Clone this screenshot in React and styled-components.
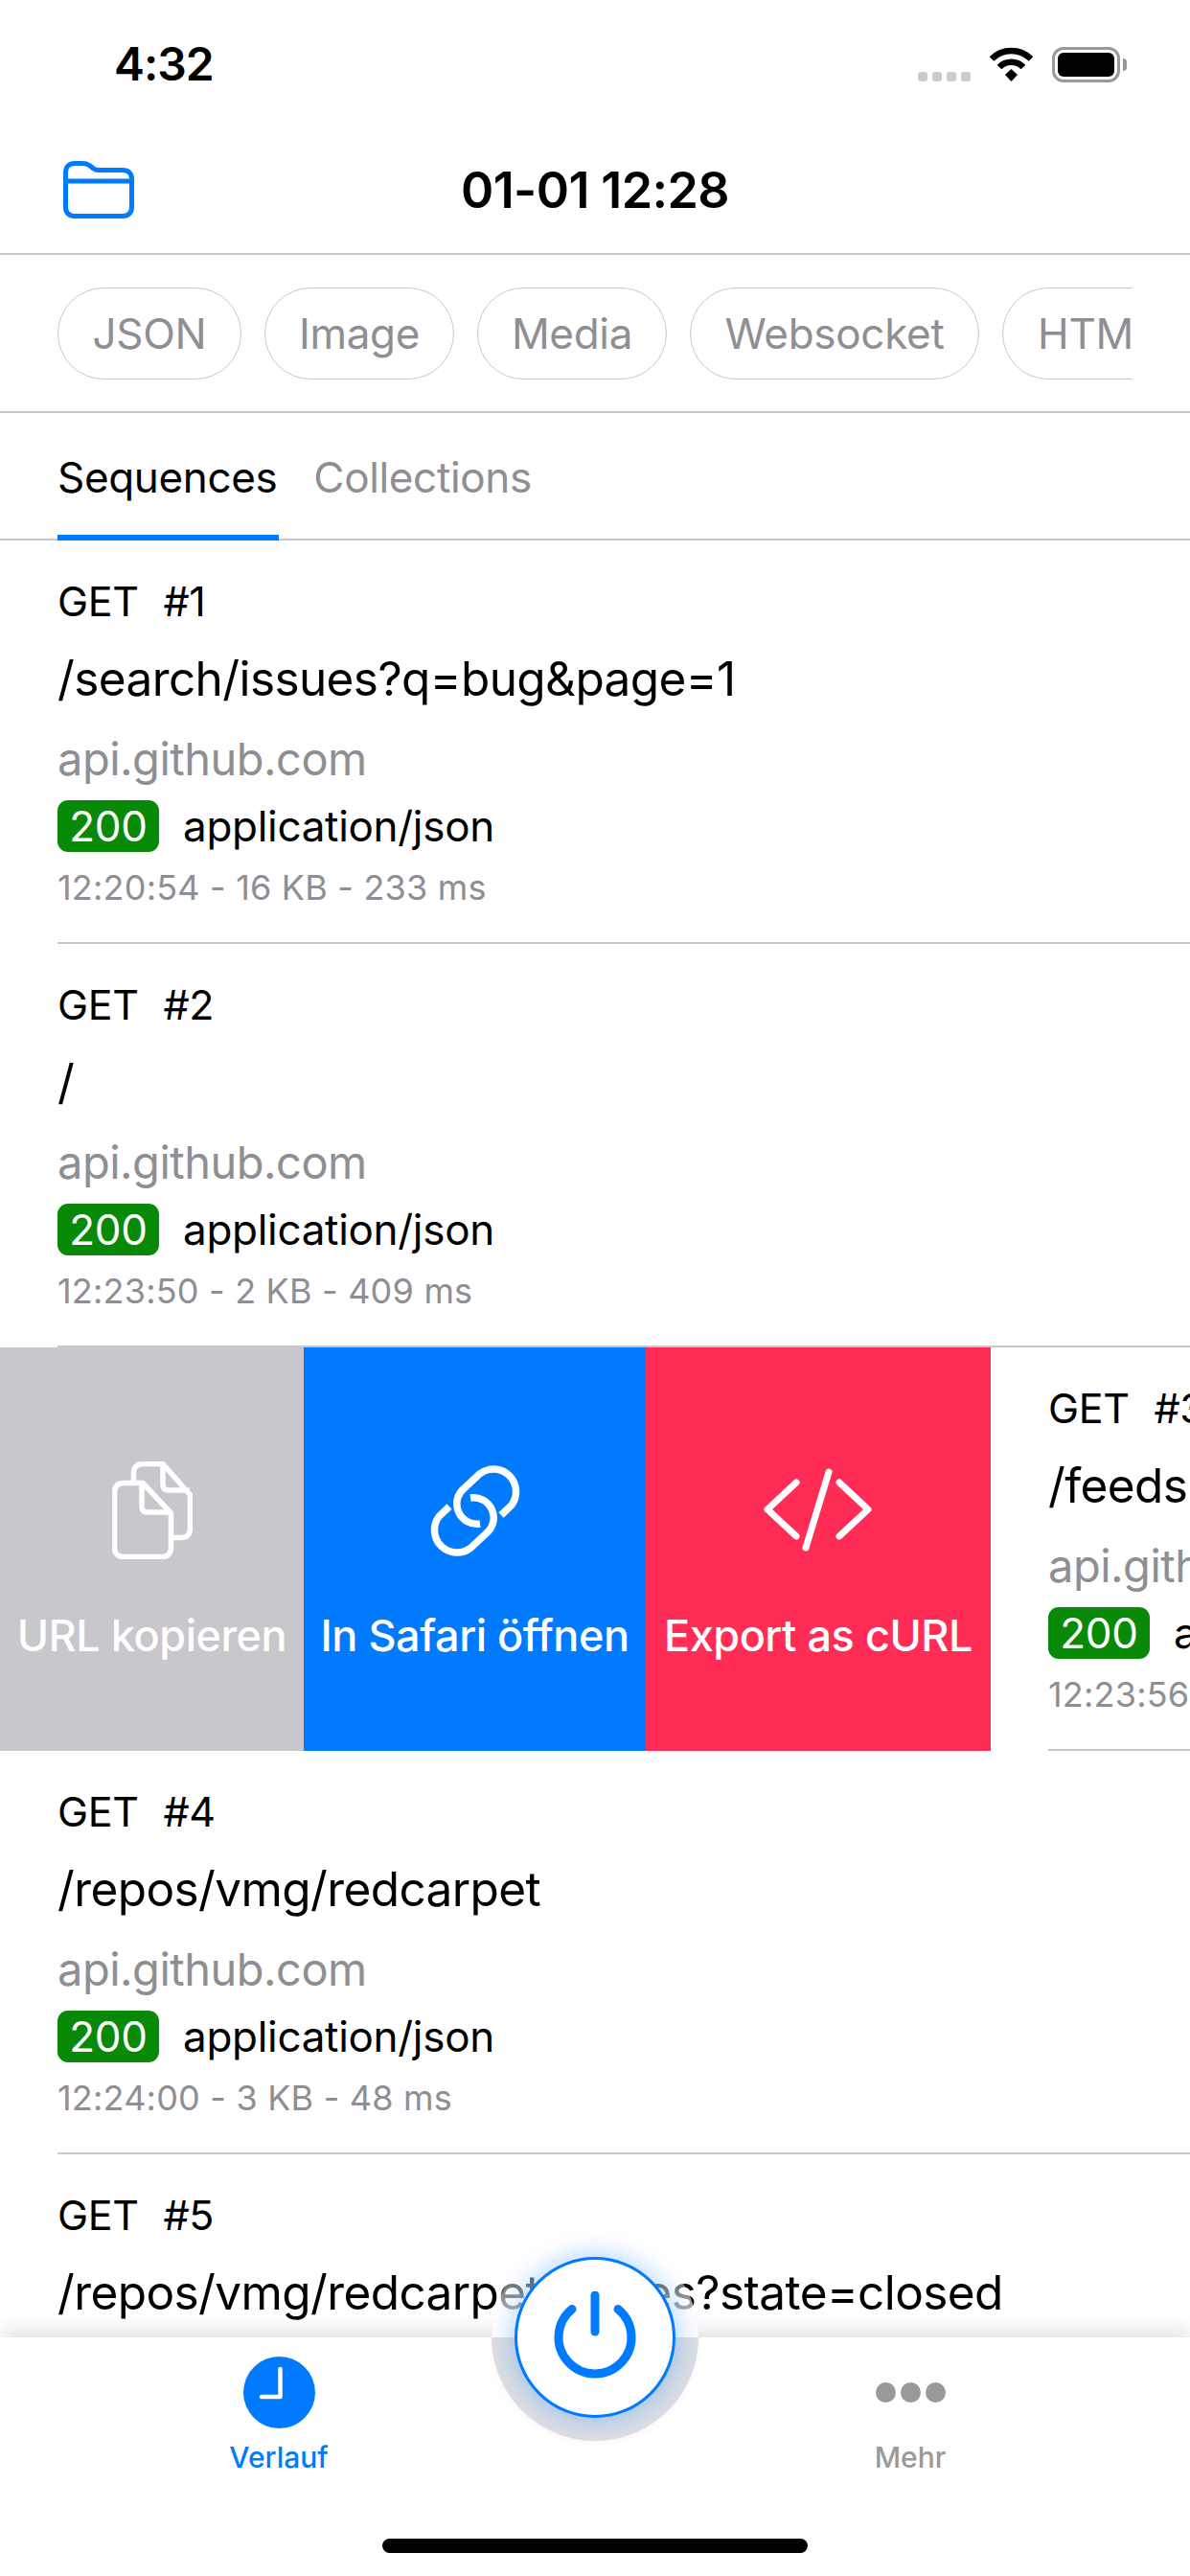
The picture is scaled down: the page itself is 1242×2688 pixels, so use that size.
import React from "react";
import styled, { createGlobalStyle } from "styled-components";

const BLUE = "#007aff";
const GRAY = "#8e8e93";
const LINE = "#c8c8cc";

const CHIPS = [
  { label: "JSON", width: 192 },
  { label: "Image", width: 198 },
  { label: "Media", width: 198 },
  { label: "Websocket", width: 302 },
  { label: "HTML", width: 192 }
];

const REQUESTS = [
  { id: 1, path: "/search/issues?q=bug&page=1", meta: "12:20:54 - 16 KB - 233 ms" },
  { id: 2, path: "/", meta: "12:23:50 - 2 KB - 409 ms" },
  { id: 3, path: "/feeds", meta: "12:23:56 - 5 KB - 120 ms", swiped: true },
  { id: 4, path: "/repos/vmg/redcarpet", meta: "12:24:00 - 3 KB - 48 ms" },
  { id: 5, path: "/repos/vmg/redcarpet/issues?state=closed", meta: "12:24:03 - 3 KB - 52 ms" }
];

const GlobalStyle = createGlobalStyle`
  html, body {
    margin: 0;
    padding: 0;
    background: #fff;
  }
  body {
    font-family: Inter, "Liberation Sans", sans-serif;
    color: #000;
  }
`;

const Page = styled.div`
  position: relative;
  width: 1242px;
  height: 2688px;
  display: flex;
  flex-direction: column;
  overflow: hidden;
  background: #fff;
`;

const StatusBar = styled.div`
  flex: none;
  height: 132px;
  display: flex;
  align-items: flex-start;
  justify-content: space-between;
  padding: 42px 73px 0 119px;
  box-sizing: border-box;
`;

const Clock = styled.div`
  font-size: 48px;
  line-height: 50px;
  font-weight: 600;
  letter-spacing: -1px;
`;

const StatusIcons = styled.div`
  display: flex;
  align-items: flex-start;
  padding-top: 7px;
`;

const SignalDots = styled.div`
  display: flex;
  gap: 5px;
  margin: 26px 19px 0 0;
`;

const SignalDot = styled.span`
  width: 10px;
  height: 10px;
  border-radius: 3px;
  background: #cccccc;
`;

const Battery = styled.div`
  position: relative;
  width: 71px;
  height: 37px;
  margin-left: 19px;
  padding: 3px;
  box-sizing: border-box;
  border: 3px solid #999;
  border-radius: 12px;

  &::after {
    content: "";
    position: absolute;
    top: 9px;
    right: -10px;
    width: 4px;
    height: 13px;
    border-radius: 0 4px 4px 0;
    background: #999;
  }
`;

const BatteryFill = styled.div`
  height: 100%;
  border-radius: 6px;
  background: #000;
`;

const NavBar = styled.div`
  flex: none;
  height: 134px;
  display: grid;
  grid-template-columns: 1fr auto 1fr;
  align-items: center;
  box-sizing: border-box;
  border-bottom: 2px solid ${LINE};
`;

const NavLeft = styled.div`
  display: flex;
  padding-left: 66px;
`;

const NavTitle = styled.div`
  padding-top: 2px;
  font-size: 52px;
  font-weight: 600;
  letter-spacing: -0.6px;
  line-height: 60px;
`;

const FilterBar = styled.div`
  flex: none;
  height: 165px;
  padding: 34px 60px 0;
  box-sizing: border-box;
  border-bottom: 2px solid ${LINE};
`;

const ChipTrack = styled.div`
  display: flex;
  gap: 24px;
  overflow: hidden;
`;

const Chip = styled.div`
  flex: none;
  width: ${p => p.$width}px;
  height: 96px;
  box-sizing: border-box;
  display: flex;
  align-items: center;
  justify-content: ${p => (p.$cut ? "flex-start" : "center")};
  padding-left: ${p => (p.$cut ? "36px" : "0")};
  border: 1.5px solid ${LINE};
  border-radius: 48px;
  font-size: 44px;
  letter-spacing: -0.3px;
  color: ${GRAY};
`;

const Tabs = styled.div`
  flex: none;
  height: 133px;
  display: flex;
  gap: 36px;
  padding-left: 60px;
  box-sizing: border-box;
  border-bottom: 2px solid ${LINE};
`;

const Tab = styled.div`
  height: 133px;
  box-sizing: border-box;
  padding: 40px 2px 0 0;
  font-size: 44px;
  line-height: 54px;
  letter-spacing: -0.35px;
  color: ${p => (p.$active ? "#000" : GRAY)};
  border-bottom: ${p => (p.$active ? `6px solid ${BLUE}` : "none")};
`;

const List = styled.div`
  flex: 1;
  min-height: 0;
  overflow: hidden;
`;

const Row = styled.div`
  flex: none;
  width: 1242px;
  height: 421px;
  box-sizing: border-box;
  padding-left: 60px;
`;

const RowBody = styled.div`
  height: 421px;
  box-sizing: border-box;
  padding-top: 40px;
  border-bottom: 2px solid ${LINE};
`;

const MethodLine = styled.div`
  display: flex;
  gap: 26px;
  font-size: 43px;
  line-height: 46px;
  letter-spacing: -0.4px;
`;

const RequestPath = styled.div`
  margin-top: 28px;
  font-size: 49.5px;
  line-height: 60px;
  letter-spacing: -0.6px;
  white-space: nowrap;
`;

const Host = styled.div`
  margin-top: 26px;
  font-size: 47px;
  line-height: 56px;
  letter-spacing: -0.5px;
  color: ${GRAY};
`;

const StatusLine = styled.div`
  margin-top: 15px;
  display: flex;
  align-items: center;
  gap: 25px;
  height: 54px;
  font-size: 44px;
  letter-spacing: -0.3px;
  white-space: nowrap;
`;

const StatusBadge = styled.span`
  flex: none;
  width: 106px;
  height: 54px;
  display: flex;
  align-items: center;
  justify-content: center;
  border-radius: 11px;
  background: #088a08;
  color: #fff;
`;

const Meta = styled.div`
  margin-top: 15px;
  font-size: 36px;
  line-height: 44px;
  letter-spacing: 0.2px;
  color: ${GRAY};
  white-space: nowrap;
`;

const SwipeRow = styled.div`
  display: flex;
  height: 421px;
  overflow: hidden;
`;

const Action = styled.div`
  flex: none;
  width: ${p => p.$width}px;
  height: 421px;
  box-sizing: border-box;
  display: flex;
  flex-direction: column;
  align-items: center;
  padding-top: 118px;
  background: ${p => p.$bg};
  color: #fff;
`;

const ActionIcon = styled.div`
  height: 104px;
  display: flex;
  align-items: center;
  justify-content: center;
`;

const ActionLabel = styled.div`
  margin-top: 54px;
  font-size: 45px;
  line-height: 50px;
  letter-spacing: -0.45px;
  font-weight: 500;
  white-space: nowrap;
`;

const TabBar = styled.div`
  position: relative;
  z-index: 1;
  flex: none;
  height: 249px;
  box-sizing: border-box;
  display: flex;
  justify-content: space-between;
  padding: 18px 232px 0 231px;
  background: #fff;
  box-shadow: 0 -6px 20px rgba(0, 0, 0, 0.13);
`;

const TabItem = styled.div`
  width: 120px;
  display: flex;
  flex-direction: column;
  align-items: center;
  color: ${p => (p.$active ? BLUE : "#999")};
`;

const TabIcon = styled.div`
  height: 78px;
  display: flex;
  align-items: center;
  justify-content: center;
`;

const TabLabel = styled.div`
  margin-top: 11px;
  font-size: 30px;
  line-height: 36px;
  font-weight: 500;
`;

const MoreDots = styled.div`
  display: flex;
  gap: 5px;
`;

const MoreDot = styled.span`
  width: 21px;
  height: 21px;
  border-radius: 50%;
  background: #999;
`;

const PowerHalo = styled.div`
  position: absolute;
  z-index: 2;
  left: 513px;
  top: 2331px;
  width: 216px;
  height: 216px;
  border-radius: 50%;
  background:
    linear-gradient(to bottom, rgba(255, 255, 255, 0) 0%, rgba(255, 255, 255, 0.92) 50%, rgba(255, 255, 255, 0) 50%),
    linear-gradient(to bottom, transparent 50%, #dcdee3 50%);
  box-shadow: 0 4px 10px -4px rgba(0, 0, 0, 0.05);
`;

const PowerButton = styled.div`
  position: absolute;
  z-index: 3;
  left: 537px;
  top: 2355px;
  width: 168px;
  height: 168px;
  box-sizing: border-box;
  display: flex;
  align-items: center;
  justify-content: center;
  border: 3.5px solid ${BLUE};
  border-radius: 50%;
  background: #fff;
  box-shadow: 0 0 24px 4px rgba(0, 122, 255, 0.28);
`;

const HomeIndicator = styled.div`
  position: absolute;
  z-index: 3;
  left: 399px;
  top: 2649px;
  width: 444px;
  height: 15px;
  border-radius: 8px;
  background: #000;
`;

const WifiIcon = () => (
  <svg width="47" height="36" viewBox="0 0 47 36" fill="none" stroke="#000" strokeWidth="6.5">
    <path d="M3 12.5A29 29 0 0 1 44 12.5" />
    <path d="M11 21A17.5 17.5 0 0 1 36 21" />
    <path d="M17 29L23.5 23L30 29L23.5 36Z" fill="#000" stroke="none" />
  </svg>
);

const FolderIcon = () => (
  <svg width="74" height="60" viewBox="0 0 74 60" fill="none" stroke={BLUE} strokeWidth="5">
    <path d="M2.5 12C2.5 6 6 2.5 12 2.5H20C24 2.5 26 3.5 28 5L31 7.5C33 9 34.5 9.5 37 9.5H62C68 9.5 71.5 13 71.5 19V48C71.5 54 68 57.5 62 57.5H12C6 57.5 2.5 54 2.5 48Z" />
    <path d="M2.5 21H71.5" />
  </svg>
);

const CopyIcon = () => (
  <svg width="84" height="102" viewBox="0 0 84 102" fill="none" stroke="#fff" strokeWidth="5.5" strokeLinejoin="round">
    <path d="M32 22.5H12C6 22.5 2.5 26 2.5 32V90C2.5 96 6 99.5 12 99.5H52C58 99.5 61.5 96 61.5 90V54L32 22.5Z" />
    <path d="M31 23V47C31 51 33 53 37 53H61" />
    <path d="M22.5 21V12C22.5 6 26 2.5 32 2.5H53L81.5 35V70C81.5 76 78 79.5 72 79.5H62" />
    <path d="M53 3V24C53 28 55 30 59 30H81" />
  </svg>
);

const LinkIcon = () => (
  <svg width="96" height="97" viewBox="0 0 96 97" fill="none" stroke="#fff" strokeWidth="7.5">
    <path d="M75 53L85.5 43A23.5 23.5 0 0 0 52.5 10L36.5 25A21 21 0 0 0 53 62" />
    <path d="M21 44L10.5 54A23.5 23.5 0 0 0 43.5 87L59.5 72A21 21 0 0 0 43 35" />
  </svg>
);

const CodeIcon = () => (
  <svg width="120" height="92" viewBox="0 0 120 92" fill="none" stroke="#fff" strokeWidth="7" strokeLinecap="round" strokeLinejoin="round">
    <path d="M37 17L7 45L37 73" />
    <path d="M71 6L47 85" />
    <path d="M82 17L112 45L82 73" />
  </svg>
);

const ClockIcon = () => (
  <svg width="75" height="75" viewBox="0 0 75 75">
    <circle cx="37.5" cy="37.5" r="37.5" fill={BLUE} />
    <path d="M38.5 13V42H19" fill="none" stroke="#fff" strokeWidth="4.5" strokeLinecap="round" strokeLinejoin="round" />
  </svg>
);

const PowerIcon = () => (
  <svg width="96" height="96" viewBox="0 0 96 96" fill="none" stroke={BLUE} strokeWidth="9" strokeLinecap="round">
    <path d="M48 4V42" />
    <path d="M24 18.5A38 38 0 1 0 72 18.5" />
  </svg>
);

const RequestBody = ({ request }) => (
  <RowBody>
    <MethodLine>
      <span>GET</span>
      <span>#{request.id}</span>
    </MethodLine>
    <RequestPath>{request.path}</RequestPath>
    <Host>api.github.com</Host>
    <StatusLine>
      <StatusBadge>200</StatusBadge>
      <span>application/json</span>
    </StatusLine>
    <Meta>{request.meta}</Meta>
  </RowBody>
);

const App = () => (
  <Page>
    <GlobalStyle />
    <StatusBar>
      <Clock>4:32</Clock>
      <StatusIcons>
        <SignalDots>
          {[0, 1, 2, 3].map(i => (
            <SignalDot key={i} />
          ))}
        </SignalDots>
        <WifiIcon />
        <Battery>
          <BatteryFill />
        </Battery>
      </StatusIcons>
    </StatusBar>
    <NavBar>
      <NavLeft>
        <FolderIcon />
      </NavLeft>
      <NavTitle>01-01 12:28</NavTitle>
    </NavBar>
    <FilterBar>
      <ChipTrack>
        {CHIPS.map((chip, i) => (
          <Chip key={chip.label} $width={chip.width} $cut={i === CHIPS.length - 1}>
            {chip.label}
          </Chip>
        ))}
      </ChipTrack>
    </FilterBar>
    <Tabs>
      <Tab $active>Sequences</Tab>
      <Tab>Collections</Tab>
    </Tabs>
    <List>
      {REQUESTS.map(request =>
        request.swiped ? (
          <SwipeRow key={request.id}>
            <Action $width={317} $bg="#c7c7cc">
              <ActionIcon>
                <CopyIcon />
              </ActionIcon>
              <ActionLabel>URL kopieren</ActionLabel>
            </Action>
            <Action $width={357} $bg="#007aff">
              <ActionIcon>
                <LinkIcon />
              </ActionIcon>
              <ActionLabel>In Safari öffnen</ActionLabel>
            </Action>
            <Action $width={360} $bg="#ff2d55">
              <ActionIcon>
                <CodeIcon />
              </ActionIcon>
              <ActionLabel>Export as cURL</ActionLabel>
            </Action>
            <Row>
              <RequestBody request={request} />
            </Row>
          </SwipeRow>
        ) : (
          <Row key={request.id}>
            <RequestBody request={request} />
          </Row>
        )
      )}
    </List>
    <TabBar>
      <TabItem $active>
        <TabIcon>
          <ClockIcon />
        </TabIcon>
        <TabLabel>Verlauf</TabLabel>
      </TabItem>
      <TabItem>
        <TabIcon>
          <MoreDots>
            <MoreDot />
            <MoreDot />
            <MoreDot />
          </MoreDots>
        </TabIcon>
        <TabLabel>Mehr</TabLabel>
      </TabItem>
    </TabBar>
    <PowerHalo />
    <PowerButton>
      <PowerIcon />
    </PowerButton>
    <HomeIndicator />
  </Page>
);

export default App;
